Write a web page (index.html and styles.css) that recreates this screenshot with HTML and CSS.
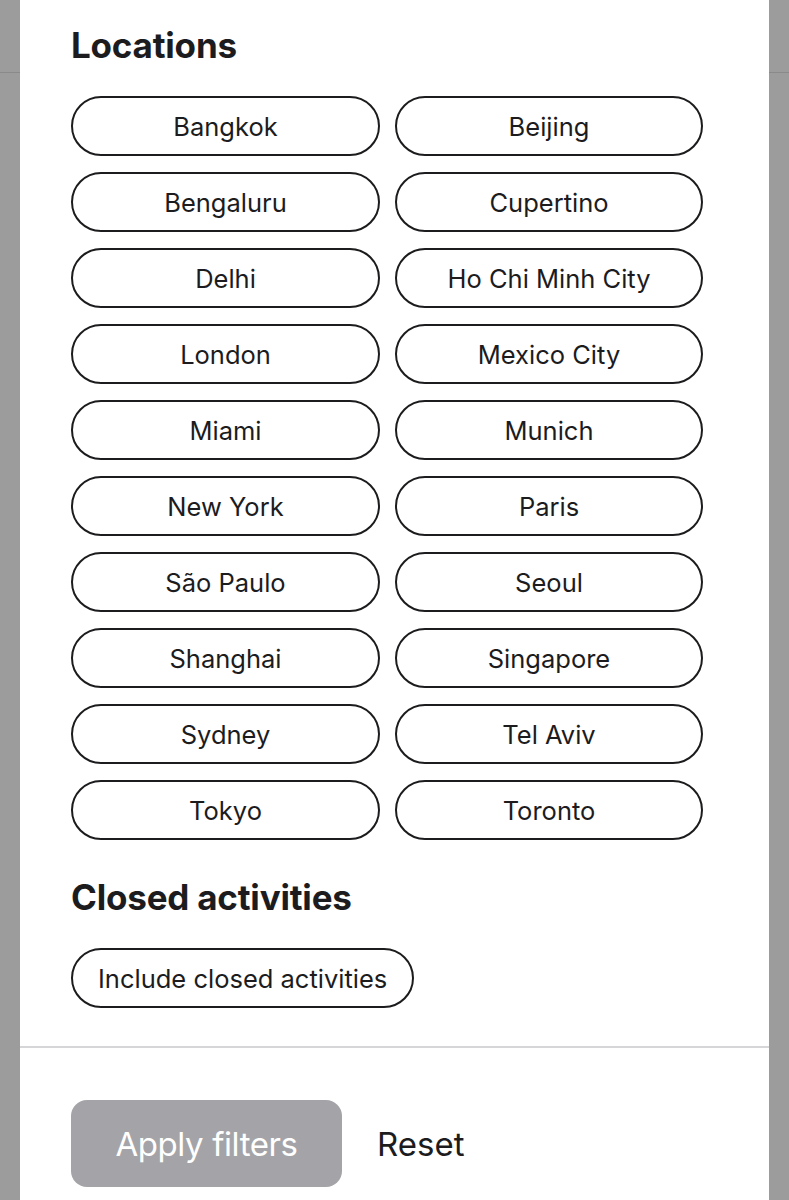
FILE: index.html
```html
<!DOCTYPE html>
<html lang="en">
<head>
<meta charset="utf-8">
<title>Filters</title>
<link rel="stylesheet" href="styles.css">
</head>
<body>
<div class="backdrop">
  <div class="sheet">
    <div class="content">
      <h2 class="section-title">Locations</h2>
      <div class="pill-grid">
        <button class="pill">Bangkok</button>
        <button class="pill">Beijing</button>
        <button class="pill">Bengaluru</button>
        <button class="pill">Cupertino</button>
        <button class="pill">Delhi</button>
        <button class="pill">Ho Chi Minh City</button>
        <button class="pill">London</button>
        <button class="pill">Mexico City</button>
        <button class="pill">Miami</button>
        <button class="pill">Munich</button>
        <button class="pill">New York</button>
        <button class="pill">Paris</button>
        <button class="pill">São Paulo</button>
        <button class="pill">Seoul</button>
        <button class="pill">Shanghai</button>
        <button class="pill">Singapore</button>
        <button class="pill">Sydney</button>
        <button class="pill">Tel Aviv</button>
        <button class="pill">Tokyo</button>
        <button class="pill">Toronto</button>
      </div>
      <h2 class="section-title second">Closed activities</h2>
      <div class="pill-row">
        <button class="pill pill-auto">Include closed activities</button>
      </div>
    </div>
    <div class="footer">
      <button class="apply">Apply filters</button>
      <button class="reset">Reset</button>
    </div>
  </div>
</div>
</body>
</html>
```
FILE: styles.css
```css
html, body {
  margin: 0;
  padding: 0;
}
body {
  background: #9c9c9c;
  font-family: Inter, "Noto Sans", "Liberation Sans", sans-serif;
  color: #1c1c1e;
}
.backdrop {
  position: relative;
  min-height: 1200px;
  overflow: hidden;
}
.backdrop::before {
  content: "";
  position: absolute;
  left: 0;
  right: 0;
  top: 72px;
  height: 1px;
  background: #8a8a8a;
}
.sheet {
  position: relative;
  margin: 0 20px;
  background: #ffffff;
  min-height: 1200px;
  display: flex;
  flex-direction: column;
}
.content {
  padding: 22px 66px 38px 51px;
}
.section-title {
  margin: 0;
  font-size: 35px;
  font-weight: 700;
  line-height: 46px;
  letter-spacing: -0.2px;
  color: #1c1c1e;
}
.section-title.second {
  margin-top: 34px;
}
.pill-grid {
  margin-top: 28px;
  display: grid;
  grid-template-columns: 309px 308px;
  column-gap: 15px;
  row-gap: 16px;
}
.pill {
  height: 60px;
  box-sizing: border-box;
  border: 2px solid #1c1c1e;
  border-radius: 30px;
  background: #ffffff;
  font-family: inherit;
  font-size: 25.5px;
  color: #1c1c1e;
  padding: 0 25px;
  display: flex;
  align-items: center;
  justify-content: center;
}
.pill-row {
  margin-top: 28px;
  display: flex;
}
.pill-auto {
  width: auto;
}
.footer {
  border-top: 2px solid #d6d6d8;
  padding: 52px 51px 0;
  display: flex;
  align-items: center;
  gap: 35px;
}
.apply {
  width: 271px;
  height: 87px;
  border: none;
  border-radius: 16px;
  background: #a4a4a8;
  color: #ffffff;
  font-family: inherit;
  font-size: 33px;
  letter-spacing: -0.4px;
  padding: 0;
}
.reset {
  border: none;
  background: none;
  padding: 0;
  font-family: inherit;
  font-size: 33px;
  color: #1c1c1e;
}
```
